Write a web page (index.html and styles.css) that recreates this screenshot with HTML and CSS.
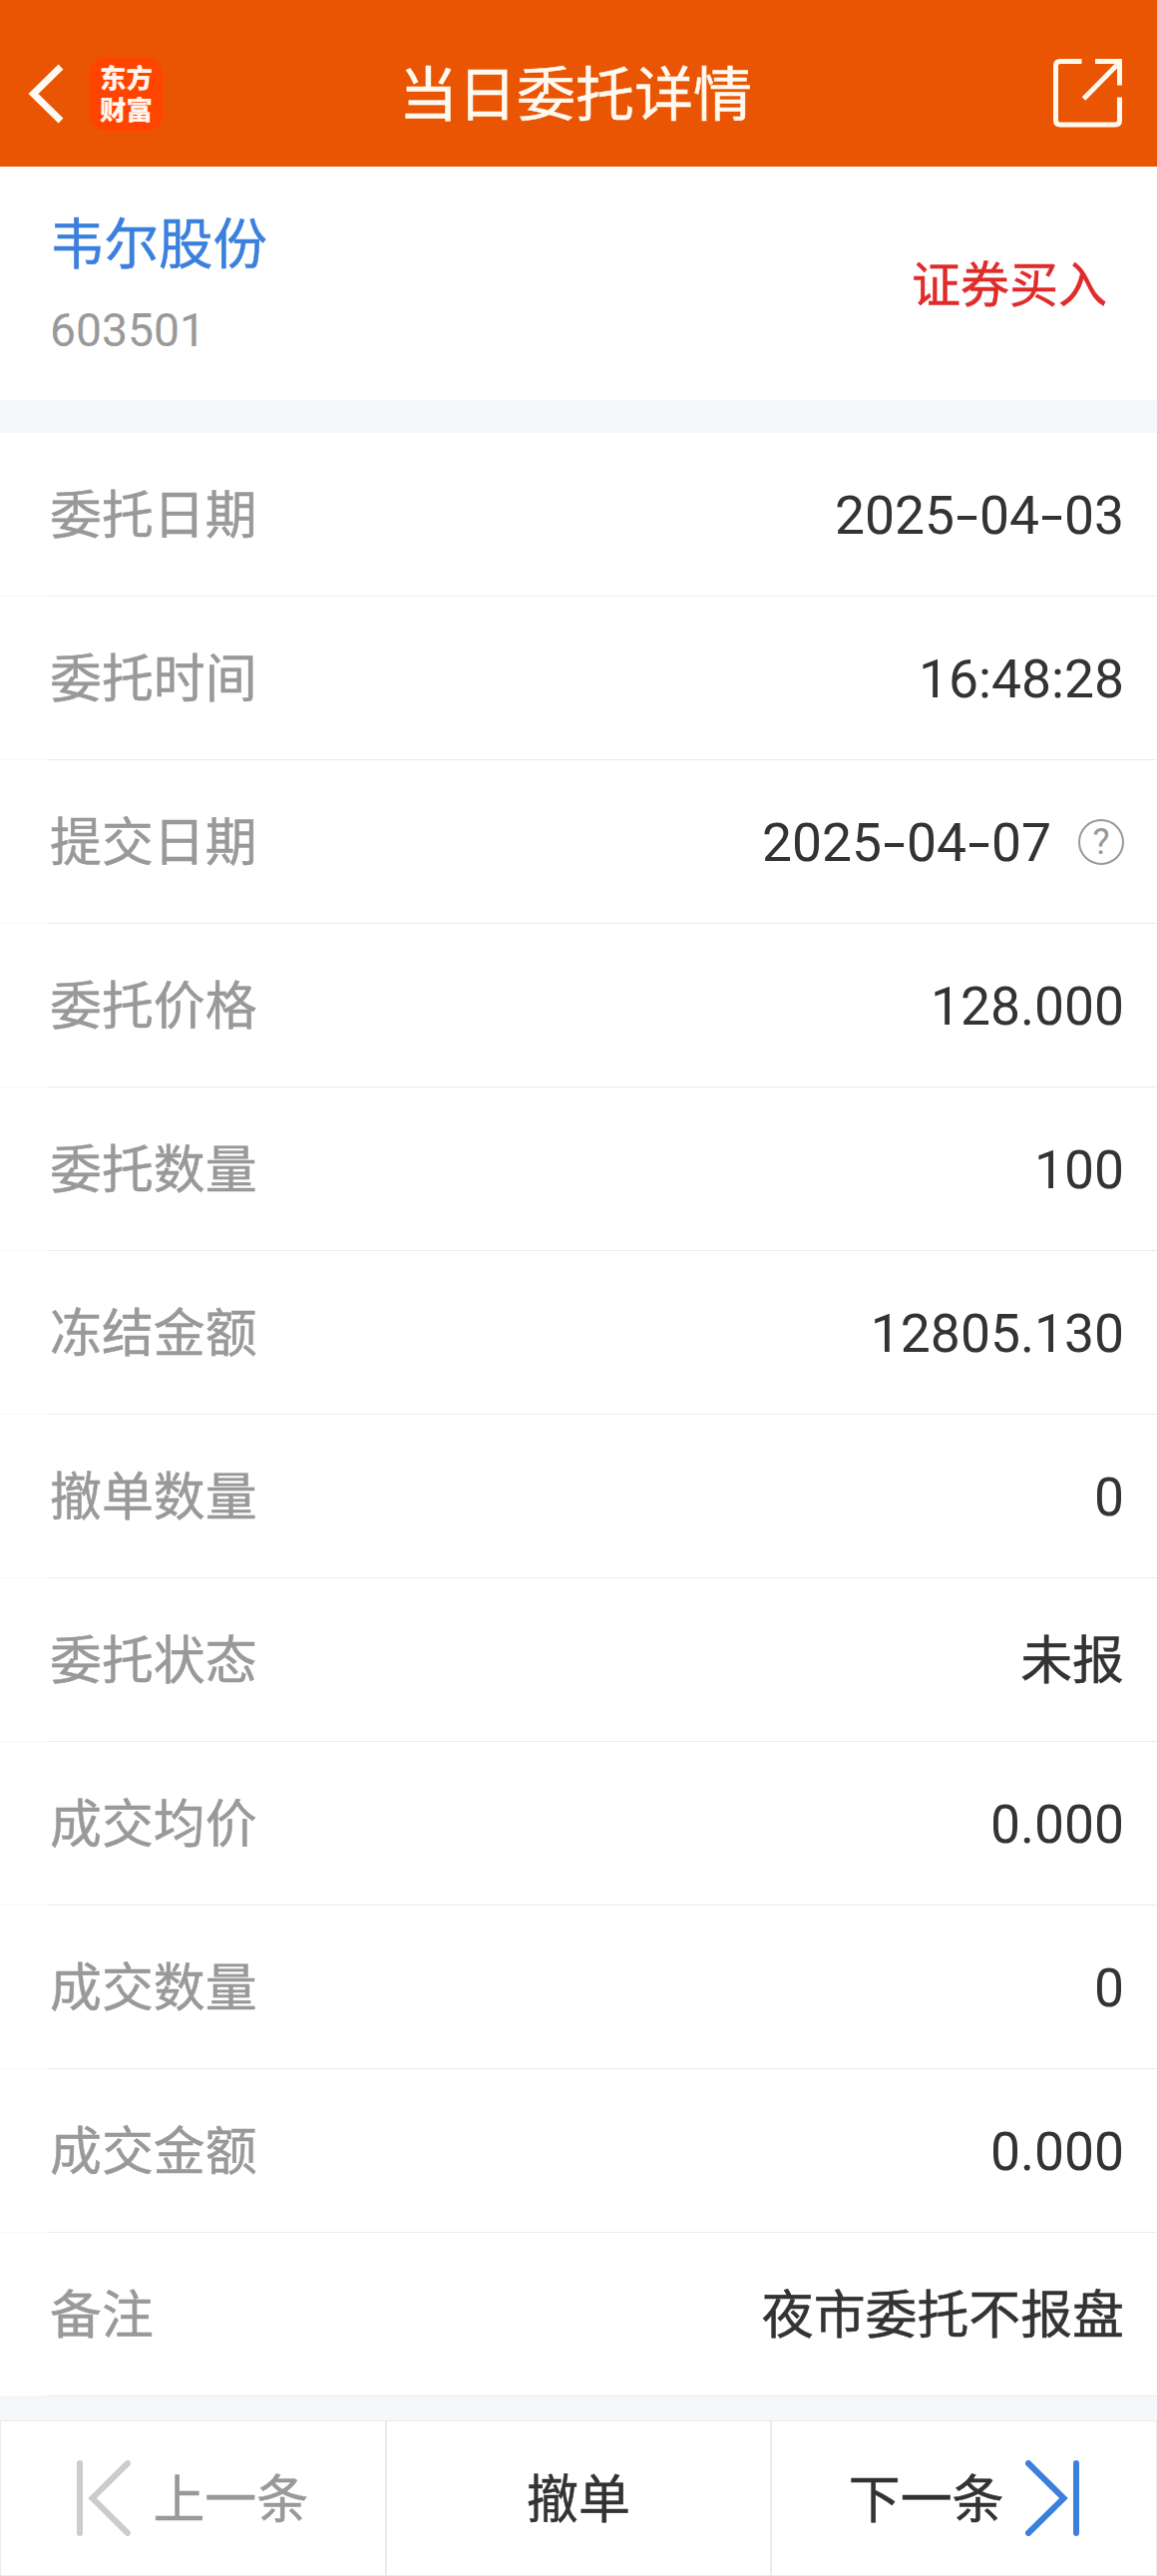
FILE: index.html
```html
<!DOCTYPE html>
<html lang="zh-CN">
<head>
<meta charset="utf-8">
<title>当日委托详情</title>
<link rel="stylesheet" href="styles.css">
</head>
<body>
<header class="header">
  <div class="header-left">
    <svg class="back" width="36" height="60" viewBox="0 0 36 60" fill="none" stroke="#fffaf2" stroke-width="7"><path d="M33 3 5.500 30 33 57"/></svg>
    <div class="logo"><span>东方</span><span>财富</span></div>
  </div>
  <h1 class="title">当日委托详情</h1>
  <svg class="share" width="70" height="70" viewBox="0 0 70 70" fill="none" stroke="#fff8ec" stroke-width="5"><path d="M28.500 2.500H7Q2.500 2.500 2.500 7V61.500Q2.500 66 7 66H62Q66.500 66 66.500 61.500V38.500M42 2.500H66.500V26.500M30.500 40 65 5"/></svg>
</header>
<section class="stock">
  <div class="stock-id">
    <div class="stock-name">韦尔股份</div>
    <div class="stock-code">603501</div>
  </div>
  <div class="side">证券买入</div>
</section>
<main class="rows">
  <div class="row"><span class="label">委托日期</span><span class="value">2025<i class="dash">-</i>04<i class="dash">-</i>03</span></div>
  <div class="row"><span class="label">委托时间</span><span class="value">16:48:28</span></div>
  <div class="row"><span class="label">提交日期</span><span class="value">2025<i class="dash">-</i>04<i class="dash">-</i>07</span><span class="help">?</span></div>
  <div class="row"><span class="label">委托价格</span><span class="value">128.000</span></div>
  <div class="row"><span class="label">委托数量</span><span class="value">100</span></div>
  <div class="row"><span class="label">冻结金额</span><span class="value">12805.130</span></div>
  <div class="row"><span class="label">撤单数量</span><span class="value">0</span></div>
  <div class="row"><span class="label">委托状态</span><span class="value zh">未报</span></div>
  <div class="row"><span class="label">成交均价</span><span class="value">0.000</span></div>
  <div class="row"><span class="label">成交数量</span><span class="value">0</span></div>
  <div class="row"><span class="label">成交金额</span><span class="value">0.000</span></div>
  <div class="row"><span class="label">备注</span><span class="value zh">夜市委托不报盘</span></div>
</main>
<footer class="actions">
  <div class="action prev">
    <svg width="54" height="76" viewBox="0 0 54 76" fill="none" stroke="#ccc" stroke-width="6" stroke-linecap="round"><path d="M3 3V73M51 3 15.500 38 51 73"/></svg>
    <span>上一条</span>
  </div>
  <div class="action"><span>撤单</span></div>
  <div class="action next">
    <span>下一条</span>
    <svg width="54" height="76" viewBox="0 0 54 76" fill="none" stroke="#3a80dc" stroke-width="6" stroke-linecap="round"><path d="M51 3V73M3 3 38.500 38 3 73"/></svg>
  </div>
</footer>
</body>
</html>
```
FILE: styles.css
```css
* { box-sizing: border-box; }
body {
  margin: 0;
  width: 1160px;
  background: #f5f7fa;
  color: #333;
  font-family: Lato, "Noto Sans CJK SC", sans-serif;
  font-size: 51.9px;
  -webkit-text-stroke: 0.5px;
}
.header {
  height: 167px;
  padding: 21px 34px 0 28px;
  background: #ea5504;
  display: grid;
  grid-template-columns: 1fr auto 1fr;
  align-items: center;
}
.header-left { display: flex; align-items: center; gap: 26px; }
.logo {
  width: 73px;
  height: 73px;
  padding-bottom: 3px;
  border-radius: 15px;
  background: #ff4400;
  color: #fff5ec;
  display: flex;
  flex-direction: column;
  align-items: center;
  justify-content: center;
  font: 900 26.5px/32px "Noto Sans CJK SC", sans-serif;
  -webkit-text-stroke: 0;
}
.title {
  margin: 0;
  color: #fffaf0;
  font-size: 59px;
  font-weight: 400;
  line-height: 80px;
}
.share { justify-self: end; }
.stock {
  height: 234px;
  padding: 0 50px;
  background: #fff;
  display: flex;
  justify-content: space-between;
  align-items: center;
}
.stock-id { padding-top: 6px; }
.stock-name { color: #3a80dc; font-size: 54.5px; line-height: 88px; }
.stock-code {
  color: #999;
  font-family: Roboto, sans-serif;
  font-size: 46.3px;
  line-height: 88px;
  -webkit-text-stroke: 0;
}
.side { color: #e02b2b; font-size: 49px; line-height: 70px; }
.rows { margin-top: 33px; background: #fff; }
.row {
  height: 164px;
  padding: 0 33px 0 50px;
  border-bottom: 1px solid;
  border-image: linear-gradient(to right, #f8f8f8 49px, #ebebeb 49px) 1;
  display: flex;
  align-items: center;
}
.label { flex: 1; padding-bottom: 2px; color: #999; line-height: 76px; }
.value {
  padding-top: 2px;
  font-family: Roboto, sans-serif;
  font-size: 53.4px;
  line-height: 76px;
  -webkit-text-stroke: 0;
}
.value.zh {
  padding: 0 0 2px;
  font-family: Lato, "Noto Sans CJK SC", sans-serif;
  font-size: 51.9px;
  -webkit-text-stroke: 0.5px;
}
.dash {
  display: inline-block;
  width: 25px;
  font-style: normal;
  text-align: center;
  transform: scaleX(1.5);
}
.help {
  width: 46px;
  height: 46px;
  margin-left: 27px;
  border: 2px solid #999;
  border-radius: 50%;
  color: #999;
  font-family: Roboto, sans-serif;
  font-size: 36px;
  line-height: 43px;
  text-align: center;
  -webkit-text-stroke: 0;
}
.actions {
  height: 156px;
  margin-top: 24px;
  background: #fff;
  display: grid;
  grid-template-columns: repeat(3, 1fr);
}
.action {
  border: 1px solid #ebebeb;
  display: flex;
  align-items: center;
  justify-content: center;
  gap: 22px;
  line-height: 76px;
}
.prev { color: #999; }
```
